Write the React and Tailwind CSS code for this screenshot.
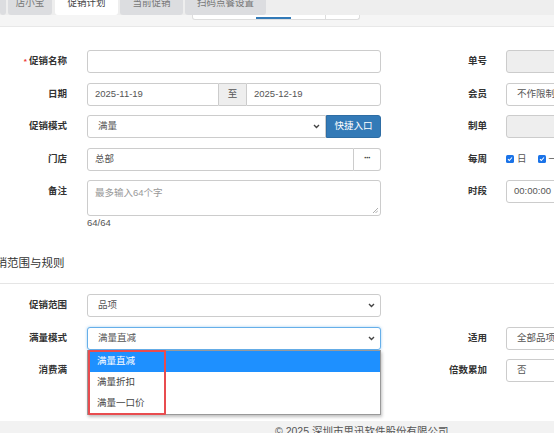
import React from "react";

const FONT = { fontFamily: '"Liberation Sans", "Noto Sans CJK SC", sans-serif' };

const Chevron = () => (
  <svg width="7" height="5" viewBox="0 0 7 5" className="shrink-0">
    <path d="M1 1l2.5 2.5L6 1" fill="none" stroke="#444" strokeWidth="1.4" />
  </svg>
);

const Check = () => (
  <span className="w-[8px] h-[8px] rounded-[1.5px] bg-[#1a73e8] flex items-center justify-center shrink-0">
    <svg width="6" height="6" viewBox="0 0 6 6">
      <path d="M1 3.2l1.3 1.3L5 1.5" fill="none" stroke="#fff" strokeWidth="1.1" />
    </svg>
  </span>
);

const Input = ({ value, placeholder, disabled, className = "" }) => (
  <div
    className={`h-full min-w-0 flex-1 border border-[#ccc] rounded-[3px] px-[7px] flex items-center whitespace-nowrap overflow-hidden text-[9.5px] text-[#555] ${
      disabled ? "bg-[#eeeeee]" : "bg-white"
    } ${className}`}
  >
    {value ? value : <span className="text-[#999]">{placeholder}</span>}
  </div>
);

const Select = ({ value, focused, className = "" }) => (
  <div
    className={`h-full min-w-0 flex-1 border rounded-[3px] pl-[10px] pr-[5px] flex items-center justify-between whitespace-nowrap text-[9.5px] text-[#555] bg-white ${
      focused ? "border-[#66afe9] shadow-[0_0_3px_rgba(102,175,233,0.6)]" : "border-[#ccc]"
    } ${className}`}
  >
    <span>{value}</span>
    <Chevron />
  </div>
);

const Row = ({ label, required, children, rlabel, right, tall }) => (
  <div className={`flex items-start shrink-0 ${tall ? "h-[36px]" : "h-[23px]"}`}>
    <div className="w-[67px] shrink-0 h-[23px] flex items-center justify-end whitespace-nowrap font-bold text-[9.5px] text-[#333]">
      {required && <span className="text-[#e33] mr-[2px] text-[8px]">*</span>}
      {label}
    </div>
    <div className="w-[294px] shrink-0 ml-[20px] h-full relative flex">{children}</div>
    <div className="w-[106px] shrink-0 h-[23px] flex items-center justify-end whitespace-nowrap font-bold text-[9.5px] text-[#333]">
      {rlabel}
    </div>
    <div className="ml-[19px] w-[220px] shrink-0 h-[23px] flex">{right}</div>
  </div>
);

const tabs = [
  { name: "", w: "w-[6px]" },
  { name: "店小宝", w: "w-[44px]" },
  { name: "促销计划", w: "w-[63px]", active: true },
  { name: "当前促销", w: "w-[63px]" },
  { name: "扫码点餐设置", w: "w-[81px]" },
];

export default function App() {
  return (
    <div className="w-[554px] h-[433px] overflow-hidden bg-white flex flex-col" style={FONT}>
      {/* tabs */}
      <div className="h-[15px] bg-[#eeeeee] flex gap-[2px] shrink-0">
        {tabs.map((t, i) => (
          <div
            key={i}
            className={`${t.w} ${i === 2 ? "ml-[1px]" : ""} shrink-0 h-full rounded-b-[3px] flex justify-center overflow-hidden whitespace-nowrap text-[9.5px] leading-[10px] ${
              t.active ? "bg-white text-[#444]" : "bg-[#dcdde0] text-[#777]"
            }`}
          >
            <span className="-mt-[2px]">{t.name}</span>
          </div>
        ))}
      </div>
      <div className="h-[12px] bg-[#f5f5f5] border-b border-[#e8e8e8] shrink-0">
        <div className="ml-[192px] w-[168px] h-[5px] bg-white border border-t-0 border-[#dddddd] rounded-b-[3px] flex">
          <div className="w-[63px]" />
          <div className="w-[35px] border-b-2 border-[#337ab7]" />
          <div className="w-[35px] border-r border-[#dddddd]" />
        </div>
      </div>

      <main className="flex-1 pt-[23px]">
        <div className="flex flex-col gap-[9.5px]">
          <Row label="促销名称" required rlabel="单号" right={<Input disabled />}>
            <Input />
          </Row>
          <Row label="日期" rlabel="会员" right={<Select value="不作限制" />}>
            <Input value="2025-11-19" className="rounded-r-none" />
            <div className="w-[27px] shrink-0 h-full border-y border-[#ccc] bg-[#eeeeee] flex items-center justify-center text-[9.5px] text-[#555]">
              至
            </div>
            <Input value="2025-12-19" className="rounded-l-none !flex-none w-[135px]" />
          </Row>
          <Row label="促销模式" rlabel="制单" right={<Input disabled />}>
            <Select value="满量" className="rounded-r-none" />
            <button className="w-[55px] shrink-0 h-full bg-[#337ab7] border border-[#2e6da4] rounded-r-[3px] text-white text-[9.5px] whitespace-nowrap">
              快捷入口
            </button>
          </Row>
          <Row
            label="门店"
            rlabel="每周"
            right={
              <div className="h-full flex items-center gap-[3px] text-[9.5px] text-[#555]">
                <Check />
                <span className="mr-[8px]">日</span>
                <Check />
                <span>一</span>
              </div>
            }
          >
            <Input value="总部" className="rounded-r-none" />
            <div className="w-[27px] shrink-0 h-full border border-l-0 border-[#ccc] rounded-r-[3px] bg-white flex items-center justify-center text-[9px] font-bold text-[#333] tracking-[-1px]">
              ···
            </div>
          </Row>
          <Row label="备注" tall rlabel="时段" right={<Input value="00:00:00" />}>
            <div className="h-full flex-1 border border-[#ccc] rounded-[3px] px-[7px] pt-[5px] text-[9.5px] text-[#999] relative">
              最多输入64个字
              <svg width="6" height="6" viewBox="0 0 6 6" className="absolute right-[2px] bottom-[2px]">
                <path d="M1 6L6 1M3.5 6L6 3.5" stroke="#999" strokeWidth="0.8" />
              </svg>
            </div>
          </Row>
        </div>
        <div className="ml-[87px] text-[9.5px] leading-[14px] text-[#555]">64/64</div>

        <div className="-ml-[16px] mt-[25px] pb-[12px] border-b border-[#e5e5e5] text-[11.5px] leading-[16px] text-[#333] whitespace-nowrap">
          促销范围与规则
        </div>

        <div className="flex flex-col gap-[9.5px] mt-[10px]">
          <Row label="促销范围">
            <Select value="品项" />
          </Row>
          <Row label="满量模式" rlabel="适用" right={<Select value="全部品项" />}>
            <Select value="满量直减" focused />
            <div className="absolute left-0 top-full w-full z-10 bg-white border border-[#999] shadow-[1px_2px_3px_rgba(0,0,0,0.25)] text-[9.5px]">
              <div className="h-[21px] pl-[9px] flex items-center bg-[#1e90ff] text-white">满量直减</div>
              <div className="h-[21px] pl-[9px] flex items-center text-[#444]">满量折扣</div>
              <div className="h-[21px] pl-[9px] flex items-center text-[#444]">满量一口价</div>
              <div className="absolute left-0 -top-[1px] w-[78px] h-[65px] border-2 border-[#e84c4f] rounded-[1px]" />
            </div>
          </Row>
          <Row label="消费满" rlabel="倍数累加" right={<Select value="否" />}>
            <Input />
          </Row>
        </div>
      </main>

      <footer className="h-[12px] shrink-0 bg-[#f2f2f2] overflow-hidden">
        <div className="ml-[275px] pt-[3px] text-[10.5px] leading-[14px] text-[#555] whitespace-nowrap">
          © 2025 深圳市思迅软件股份有限公司
        </div>
      </footer>
    </div>
  );
}
